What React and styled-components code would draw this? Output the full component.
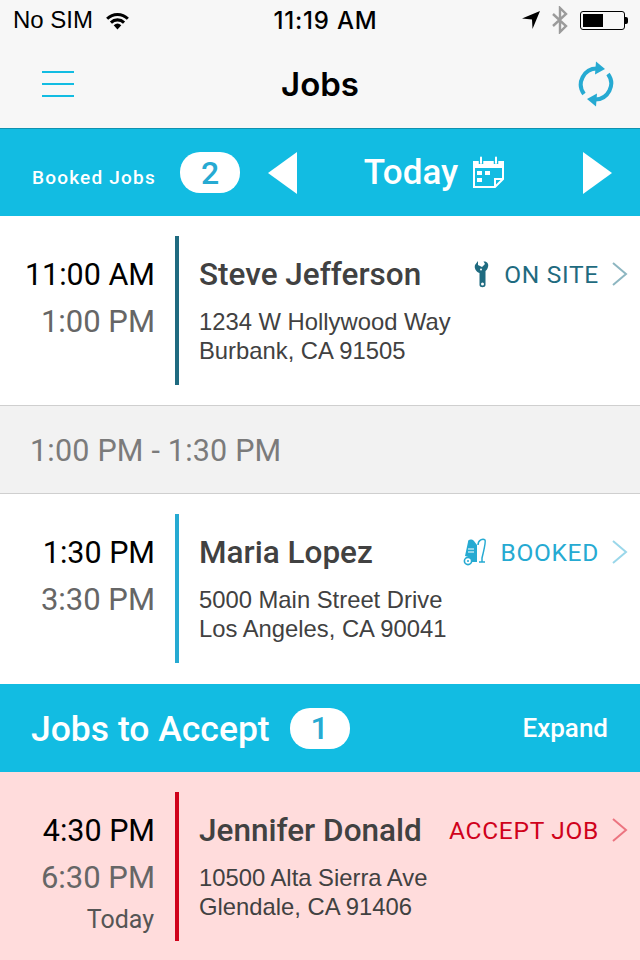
import React from "react";
import styled, { createGlobalStyle } from "styled-components";

const CYAN = "#12bce2";

const GlobalStyle = createGlobalStyle`
  html, body {
    margin: 0;
    padding: 0;
    background: #fff;
    font-family: "Roboto", "Liberation Sans", sans-serif;
  }
`;

const jobs = [
  {
    start: "11:00 AM",
    end: "1:00 PM",
    name: "Steve Jefferson",
    lines: ["1234 W Hollywood Way", "Burbank, CA 91505"],
    status: "ON SITE",
    color: "#1f6b80",
    chevron: "#8db6c1",
    icon: "wrench",
    height: 189,
  },
  {
    start: "1:30 PM",
    end: "3:30 PM",
    name: "Maria Lopez",
    lines: ["5000 Main Street Drive", "Los Angeles, CA 90041"],
    status: "BOOKED",
    color: "#26aad2",
    chevron: "#9ad7ea",
    icon: "vacuum",
    height: 190,
  },
];

const WifiIcon = () => (
  <svg width="25" height="19" viewBox="0 0 26 20">
    <path d="M1 7 A17 17 0 0 1 25 7 L22.8 9.3 A14 14 0 0 0 3.2 9.3 Z" fill="#000" />
    <path d="M5 11 A11.5 11.5 0 0 1 21 11 L18.8 13.3 A8.4 8.4 0 0 0 7.2 13.3 Z" fill="#000" />
    <path d="M9 15 A6 6 0 0 1 17 15 L13 19.5 Z" fill="#000" />
  </svg>
);

const LocationIcon = () => (
  <svg width="18" height="18" viewBox="0 0 18 18">
    <path d="M18 0 L0 7.5 L10 8.5 L10.5 18 Z" fill="#000" />
  </svg>
);

const BluetoothIcon = () => (
  <svg width="18" height="28" viewBox="0 0 18 28">
    <path d="M2 8 L15 20 L9 26 L9 2 L15 8 L2 20" fill="none" stroke="#9b9b9b" strokeWidth="2.4" />
  </svg>
);

const RefreshIcon = () => (
  <svg width="40" height="46" viewBox="0 0 40 46">
    <g fill="none" stroke="#26aad2" strokeWidth="4">
      <path d="M8 33 A16 16 0 0 1 21 7.5" />
      <path d="M32 13 A16 16 0 0 1 19 38.5" />
    </g>
    <path d="M20 0.5 L29 8 L19 13.5 Z" fill="#26aad2" />
    <path d="M20 45.5 L11 38 L21 32.5 Z" fill="#26aad2" />
  </svg>
);

const CalendarIcon = () => (
  <svg width="33" height="33" viewBox="0 0 33 33">
    <path d="M2 6 H31 V23 L23 31 H2 Z" fill="none" stroke="#fff" strokeWidth="2" />
    <path d="M2 6 H31 V12 H2 Z" fill="#fff" />
    <path d="M31 23 H23 V31" fill="none" stroke="#fff" strokeWidth="2" />
    <path d="M9 1 V8 M24 1 V8" stroke={CYAN} strokeWidth="4.5" />
    <path d="M9 1.5 V7 M24 1.5 V7" stroke="#fff" strokeWidth="2" strokeLinecap="round" />
    <path d="M5 15 H10 V19 H5 Z M13 15 H18 V19 H13 Z M5 22 H10 V26 H5 Z" fill="#fff" />
  </svg>
);

const WrenchIcon = ({ color }) => (
  <svg width="18" height="28" viewBox="0 0 18 28">
    <path
      d="M5 1 L5 5 L9 7 L12 4 L10.5 1.5 C14 1 16 4 15 7 C14.5 9.5 13 10.5 12.5 11 L12.5 25 C12.5 28 6.5 28 6.5 25 L6.5 13 C3 12 1 8 2 5 Z"
      fill={color}
    />
    <circle cx="9.5" cy="24" r="1.5" fill="#fff" />
    <circle cx="8" cy="9.5" r="1" fill="#fff" />
  </svg>
);

const VacuumIcon = ({ color }) => (
  <svg width="24" height="28" viewBox="0 0 24 28">
    <path d="M5 4 C5 1 9 1 11 3 L14 7 L14 24 L8 24 A6 6 0 0 0 2 18 Z" fill={color} />
    <path d="M5 11 H11 M5 14 H11" stroke="#fff" strokeWidth="1.2" />
    <circle cx="5" cy="23" r="3.6" fill="#fff" stroke={color} strokeWidth="1.6" />
    <circle cx="5" cy="23" r="1" fill={color} />
    <path d="M15 7 C15 2 20 0 22 2 C23 4 21 12 19 20 L19 24 M16 24 H22" fill="none" stroke={color} strokeWidth="1.5" />
  </svg>
);

const Chevron = ({ color }) => (
  <svg width="16" height="24" viewBox="0 0 16 24">
    <path d="M1 1 L14 12 L1 23" fill="none" stroke={color} strokeWidth="2" />
  </svg>
);

const Triangle = ({ right }) => (
  <svg width="30" height="42" viewBox="0 0 30 42">
    <path d={right ? "M0 0 L29 21 L0 42 Z" : "M29 0 L0 21 L29 42 Z"} fill="#fff" />
  </svg>
);

const JobRow = ({ job }) => (
  <Row $bg={job.bg} $height={job.height}>
    <Times>
      <Start>{job.start}</Start>
      <End>{job.end}</End>
      {job.day && <Day>{job.day}</Day>}
    </Times>
    <Divider $color={job.color} />
    <Details>
      <TopLine>
        <Name>{job.name}</Name>
        <Status $color={job.color}>
          {job.icon === "wrench" && <WrenchIcon color={job.color} />}
          {job.icon === "vacuum" && <VacuumIcon color={job.color} />}
          <StatusText>{job.status}</StatusText>
          <Chevron color={job.chevron} />
        </Status>
      </TopLine>
      <Address>
        {job.lines.map((line) => (
          <div key={line}>{line}</div>
        ))}
      </Address>
    </Details>
  </Row>
);

export default function App() {
  return (
    <Page>
      <GlobalStyle />
      <TopArea>
        <StatusBar>
          <StatusSide>
            <span>No SIM</span>
            <WifiIcon />
          </StatusSide>
          <Clock>11:19 AM</Clock>
          <StatusSide $right>
            <LocationIcon />
            <BluetoothIcon />
            <Battery>
              <BatteryFill />
            </Battery>
          </StatusSide>
        </StatusBar>
        <NavBar>
          <Burger>
            <i />
            <i />
            <i />
          </Burger>
          <NavTitle>Jobs</NavTitle>
          <NavRight>
            <RefreshIcon />
          </NavRight>
        </NavBar>
      </TopArea>

      <DateBar>
        <BookedLabel>Booked Jobs</BookedLabel>
        <Count>2</Count>
        <Triangle />
        <TodayBlock>
          <span>Today</span>
          <CalendarIcon />
        </TodayBlock>
        <Triangle right />
      </DateBar>

      <JobRow job={jobs[0]} />
      <FreeSlot>1:00 PM - 1:30 PM</FreeSlot>
      <JobRow job={jobs[1]} />

      <AcceptBar>
        <AcceptTitle>Jobs to Accept</AcceptTitle>
        <Count>1</Count>
        <Expand>Expand</Expand>
      </AcceptBar>

      <JobRow
        job={{
          start: "4:30 PM",
          end: "6:30 PM",
          day: "Today",
          name: "Jennifer Donald",
          lines: ["10500 Alta Sierra Ave", "Glendale, CA 91406"],
          status: "ACCEPT JOB",
          color: "#d0021b",
          chevron: "#ec7480",
          bg: "#ffdcdc",
          height: 188,
        }}
      />
    </Page>
  );
}

const Page = styled.div`
  width: 640px;
  height: 960px;
  overflow: hidden;
  background: #fff;
`;

const TopArea = styled.header`
  background: #f7f7f7;
  border-bottom: 1px solid #0f92b0;
  height: 129px;
  box-sizing: border-box;
`;

const StatusBar = styled.div`
  height: 40px;
  padding: 0 12px 0 13px;
  display: grid;
  grid-template-columns: 1fr auto 1fr;
  align-items: center;
  font-family: "Liberation Sans", sans-serif;
  font-size: 24px;
  color: #000;
`;

const StatusSide = styled.div`
  display: flex;
  align-items: center;
  gap: ${(p) => (p.$right ? "11px" : "12px")};
  justify-content: ${(p) => (p.$right ? "flex-end" : "flex-start")};
`;

const Clock = styled.div`
  font-family: "Inter", sans-serif;
  font-weight: 500;
  font-size: 24px;
  letter-spacing: 0.8px;
  margin-left: 10px;
`;

const Battery = styled.div`
  position: relative;
  width: 45px;
  height: 19px;
  border: 1px solid #000;
  border-radius: 3px;
  padding: 2px;
  box-sizing: border-box;
  margin-right: 3px;
  &::after {
    content: "";
    position: absolute;
    right: -4px;
    top: 5px;
    width: 3px;
    height: 7px;
    background: #000;
    border-radius: 0 2px 2px 0;
  }
`;

const BatteryFill = styled.div`
  width: 20px;
  height: 100%;
  background: #000;
`;

const NavBar = styled.div`
  height: 88px;
  padding: 0 24px;
  display: grid;
  grid-template-columns: 1fr auto 1fr;
  align-items: center;
`;

const NavRight = styled.div`
  display: flex;
  justify-content: flex-end;
`;

const Burger = styled.div`
  width: 32px;
  margin-left: 18px;
  display: flex;
  flex-direction: column;
  gap: 10px;
  i {
    display: block;
    height: 2px;
    background: ${CYAN};
  }
`;

const NavTitle = styled.div`
  font-family: "Inter", sans-serif;
  font-size: 33px;
  font-weight: 600;
  color: #000;
`;

const DateBar = styled.div`
  height: 87px;
  background: ${CYAN};
  display: flex;
  align-items: center;
  padding: 0 27px 0 32px;
  color: #fff;
`;

const BookedLabel = styled.div`
  font-size: 19px;
  font-weight: 500;
  letter-spacing: 1.2px;
  width: 148px;
  padding-top: 10px;
`;

const Count = styled.div`
  width: 60px;
  height: 41px;
  border-radius: 20px;
  background: #fff;
  color: #26aad2;
  font-size: 32px;
  font-weight: 500;
  display: flex;
  align-items: center;
  justify-content: center;
  margin-right: 28px;
`;

const TodayBlock = styled.div`
  flex: 1;
  display: flex;
  align-items: center;
  justify-content: center;
  gap: 14px;
  padding-right: 12px;
  font-size: 35px;
  font-weight: 500;
`;

const Row = styled.div`
  height: ${(p) => p.$height}px;
  box-sizing: border-box;
  background: ${(p) => p.$bg || "#fff"};
  display: flex;
  padding: 20px 0 0;
`;

const Times = styled.div`
  width: 155px;
  text-align: right;
  padding-top: 21px;
`;

const Start = styled.div`
  font-size: 30.5px;
  line-height: 36px;
  color: #000;
`;

const End = styled.div`
  font-size: 31px;
  line-height: 36px;
  margin-top: 11px;
  color: #666;
`;

const Day = styled.div`
  font-size: 25px;
  line-height: 30px;
  margin-top: 9px;
  padding-right: 1px;
  color: #555;
`;

const Divider = styled.div`
  width: 4px;
  height: 149px;
  margin: 0 20px;
  background: ${(p) => p.$color};
`;

const Details = styled.div`
  flex: 1;
  padding-top: 19px;
  min-width: 0;
`;

const TopLine = styled.div`
  display: flex;
  align-items: center;
  justify-content: space-between;
  height: 38px;
  padding-right: 12px;
`;

const Name = styled.div`
  font-size: 31.5px;
  font-weight: 500;
  color: #414141;
`;

const Status = styled.div`
  display: flex;
  align-items: center;
  gap: 13px;
  color: ${(p) => p.$color};
`;

const StatusText = styled.span`
  font-size: 24.5px;
  font-weight: 400;
  letter-spacing: 0.7px;
`;

const Address = styled.div`
  margin-top: 14px;
  font-family: "Liberation Sans", sans-serif;
  font-size: 23.8px;
  line-height: 29px;
  color: #414141;
`;

const FreeSlot = styled.div`
  height: 89px;
  box-sizing: border-box;
  background: #f2f2f2;
  border-top: 1px solid #cfcfcf;
  border-bottom: 1px solid #cfcfcf;
  display: flex;
  align-items: center;
  padding: 2px 0 0 30px;
  font-size: 30.5px;
  font-weight: 400;
  color: #7b7b7b;
  letter-spacing: 0.2px;
`;

const AcceptBar = styled.div`
  height: 88px;
  background: ${CYAN};
  color: #fff;
  display: flex;
  align-items: center;
  padding: 0 32px 0 31px;
`;

const AcceptTitle = styled.div`
  font-size: 35.5px;
  font-weight: 500;
  margin-right: 20px;
  padding-top: 2px;
`;

const Expand = styled.div`
  margin-left: auto;
  font-size: 26px;
  font-weight: 500;
`;
